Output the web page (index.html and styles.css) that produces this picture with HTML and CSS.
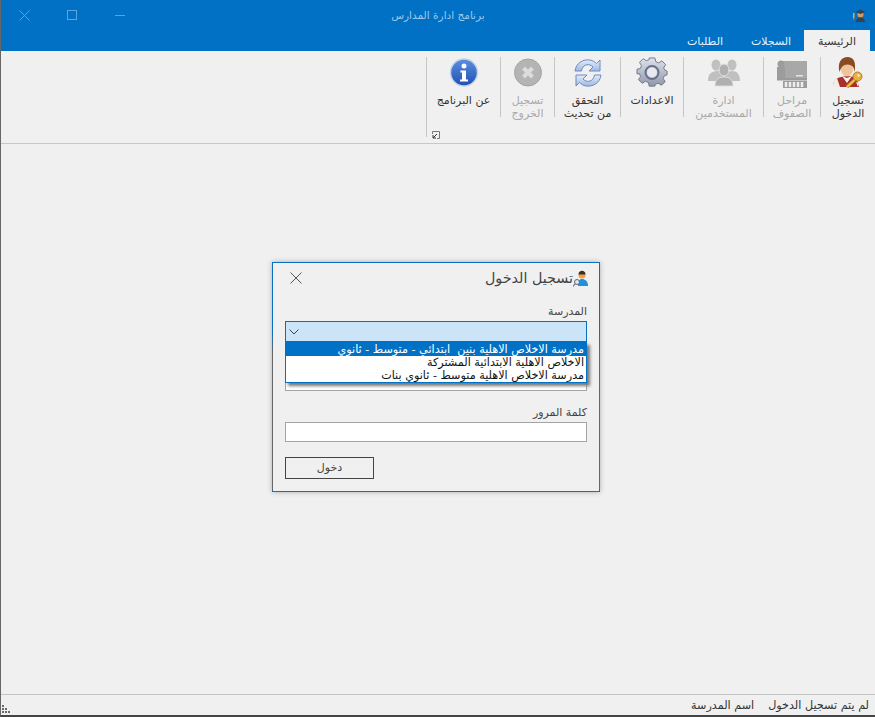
FILE: index.html
```html
<!DOCTYPE html>
<html lang="ar">
<head>
	<meta charset="utf-8"/>
	<title>برنامج ادارة المدارس</title>
	<link rel="stylesheet" href="styles.css">
</head>
<body>
	<div class="app">
		<header class="titlebar">
			<div class="win-buttons">
				<svg width="11" height="11" viewBox="0 0 11 11"><path d="M0.500 0.500l10 10M10.500 0.500l-10 10" stroke="#5ba5de" fill="none"/></svg>
				<svg width="11" height="11" viewBox="0 0 11 11"><rect x="0.500" y="0.500" width="9" height="9" fill="none" stroke="#5ba5de"/></svg>
				<svg class="win-min" width="11" height="2" viewBox="0 0 11 2"><rect width="10" height="1" fill="#5ba5de"/></svg>
			</div>
			<div class="app-title">برنامج ادارة المدارس</div>
			<div class="app-icon-box">
				<svg width="13" height="13" viewBox="0 0 13 13">
					<rect x="0" y="4" width="1.500" height="5" fill="#e8b020"/>
					<path d="M0 9l.8 3 .7-3z" fill="#e07020"/>
					<circle cx="7.500" cy="5.500" r="3" fill="#d09a68"/>
					<path d="M2.500 3L7.500 .5 12.500 3 7.500 5z" fill="#39424c"/>
					<path d="M3 13c0-3 2-4.500 4.500-4.500S12 10 12 13z" fill="#39424c"/>
				</svg>
			</div>
		</header>

		<nav class="tabs">
			<div class="tab active">الرئيسية</div>
			<div class="tab">السجلات</div>
			<div class="tab">الطلبات</div>
		</nav>

		<section class="ribbon">
			<div class="rib-item">
				<svg class="rib-icon" viewBox="0 0 32 32">
					<path d="M1 30c0-7 3-10 14-11 8 0 11 3 12 11z" fill="#a8302a"/>
					<path d="M1 30c0-5 1-7 4-9l3 9zM26 30l-2-5 3 1z" fill="#f2ece4"/>
					<path d="M10 19l5 7 5-7-5 2z" fill="#f6f2ea"/>
					<ellipse cx="15" cy="12" rx="6" ry="7.500" fill="#f0c49a"/>
					<path d="M7.500 15C5 5 10 0 15.500 0c6 0 9 5 7 15-.5-5-2-7-7-7.500-4.500 0-6.500 3-8 7.500z" fill="#8a4a22"/>
					<circle cx="25.500" cy="19.500" r="4.500" fill="#e9b040" stroke="#b97c20"/>
					<circle cx="26.500" cy="18.500" r="1.200" fill="#fff2c8"/>
					<path d="M22.500 23L15 30" stroke="#b97c20" stroke-width="3.500" fill="none"/>
					<path d="M22.500 23L15 30" stroke="#efc050" stroke-width="2" fill="none"/>
				</svg>
				<span>تسجيل<br>الدخول</span>
			</div>
			<div class="rib-item off">
				<svg class="rib-icon" viewBox="0 0 32 32">
					<rect x="6" y="4" width="25" height="17" fill="#a8a8a8"/>
					<circle cx="5" cy="7" r="3.500" fill="#9c9c9c"/>
					<rect x="1" y="10" width="8" height="12" fill="#9c9c9c"/>
					<rect x="20" y="18" width="7" height="1.500" fill="#e4e4e4"/>
					<rect x="1" y="21" width="30" height="2.500" fill="#9a9a9a"/>
					<rect x="7" y="24" width="24" height="7" fill="#9c9c9c"/>
					<path d="M10 25v5M14 25v5M18 25v5M22 25v5M26 25v5" stroke="#eeeeee" stroke-width="2.500"/>
				</svg>
				<span>مراحل<br>الصفوف</span>
			</div>
			<div class="rib-item off">
				<svg class="rib-icon" viewBox="0 0 32 32">
					<ellipse cx="8" cy="8" rx="4.500" ry="5.500" fill="#c0c0c0"/>
					<ellipse cx="24" cy="8" rx="4.500" ry="5.500" fill="#c0c0c0"/>
					<path d="M0 24c0-7 3-9 8-10s8 3 8 10zM16 24c0-7 3-10 8-10s8 3 8 10z" fill="#c0c0c0"/>
					<ellipse cx="16" cy="13" rx="5" ry="6" fill="#b0b0b0" stroke="#dedede"/>
					<path d="M7 29c0-6 3-9 9-9s9 3 9 9z" fill="#b0b0b0" stroke="#dedede"/>
				</svg>
				<span>ادارة<br>المستخدمين</span>
			</div>
			<div class="rib-item">
				<svg class="rib-icon" viewBox="0 0 32 32">
					<defs>
						<linearGradient id="gearFill" x1="0" y1="0" x2="0" y2="1">
							<stop offset="0" stop-color="#dfe3ec"/>
							<stop offset="1" stop-color="#8f97ab"/>
						</linearGradient>
					</defs>
					<path d="M13 1h6l1 4 3 1.300 3.500-2.200 4 4-2.200 3.500L29.600 14l2.400 1v4l-2.900.9-1.300 3 2.200 3.400-4 3.700-3.500-2.100-3 1.200L19 31h-6l-.9-3.900-3-1.200-3.600 2.100-3.900-3.900 2.200-3.400-1.300-3L0 18v-5l3.500-.7 1.300-3L2.700 5.700l3.800-3.900L10 4l3-1.300z" transform="translate(1 0) scale(.94)" fill="url(#gearFill)" stroke="#6d7487"/>
					<circle cx="16" cy="15.500" r="6.500" fill="none" stroke="#69708a" stroke-width="2"/>
					<circle cx="16" cy="15.500" r="5" fill="#e8eaee"/>
				</svg>
				<span>الاعدادات</span>
			</div>
			<div class="rib-item">
				<svg class="rib-icon" viewBox="0 0 32 32">
					<defs>
						<linearGradient id="syncFill" x1="0" y1="0" x2="0" y2="1">
							<stop offset="0" stop-color="#e4ebf8"/>
							<stop offset="1" stop-color="#a0b8e0"/>
						</linearGradient>
					</defs>
					<path d="M3 14C4 6 11 2 18 3c3 .5 5 2 6.500 3.500L28 3v11H17l4-4c-2-2-4-2.500-6-2.300-3 .3-5 3-5.500 6.300z" fill="url(#syncFill)" stroke="#6b8cc4"/>
					<path d="M29 18c-1 8-8 12-15 11-3-.5-5-2-6.500-3.500L4 29V18h11l-4 4c2 2 4 2.500 6 2.300 3-.3 5-3 5.500-6.300z" fill="url(#syncFill)" stroke="#6b8cc4"/>
				</svg>
				<span>التحقق<br>من تحديث</span>
			</div>
			<div class="rib-item off">
				<svg class="rib-icon" viewBox="0 0 32 32">
					<circle cx="16" cy="15.500" r="13.500" fill="#b4b4b4" stroke="#a4a4a4"/>
					<path d="M11.500 11l9 9M20.500 11l-9 9" stroke="#dcdcdc" stroke-width="4" fill="none"/>
				</svg>
				<span>تسجيل<br>الخروج</span>
			</div>
			<div class="rib-item last">
				<svg class="rib-icon" viewBox="0 0 32 32">
					<defs>
						<linearGradient id="infoFill" x1="0" y1="0" x2="0" y2="1">
							<stop offset="0" stop-color="#5d8fe0"/>
							<stop offset="1" stop-color="#1f4fb0"/>
						</linearGradient>
					</defs>
					<circle cx="16" cy="15.500" r="13.500" fill="url(#infoFill)" stroke="#c4d2ea" stroke-width="1.500"/>
					<circle cx="16" cy="9" r="2.500" fill="#fff"/>
					<path d="M12.500 13.500H18v9h2v2h-8v-2h2v-7h-1.500z" fill="#fff"/>
				</svg>
				<span>عن البرنامج</span>
			</div>
			<svg class="launcher" width="8" height="8" viewBox="0 0 8 8">
				<path d="M0.500 3V0.500H7.500V7.500H5" fill="none" stroke="#777"/>
				<path d="M5 3L1 7M1 4v3h3" fill="none" stroke="#333"/>
			</svg>
		</section>

		<main class="workspace">
			<div class="dialog">
				<div class="dialog-head">
					<div class="dialog-title">
						<svg width="16" height="17" viewBox="0 0 16 17">
							<circle cx="9" cy="5" r="3.500" fill="#f0a040"/>
							<path d="M5.500 4.500c0-5 7-5 7 0z" fill="#3a3028"/>
							<path d="M5 16c0-5 1-7 4-7s6 2 6 7z" fill="#1e90e0"/>
							<circle cx="4" cy="12" r="2.500" fill="#dce8f0" stroke="#667"/>
							<path d="M2 14l-2 2.500" stroke="#667" stroke-width="1.200"/>
						</svg>
						<span>تسجيل الدخول</span>
					</div>
					<svg class="dialog-close" width="12" height="12" viewBox="0 0 12 12">
						<path d="M0.500 0.500l11 11M11.500 0.500l-11 11" stroke="#555" fill="none"/>
					</svg>
				</div>
				<label class="field-label first">المدرسة</label>
				<div class="combo">
					<svg width="10" height="6" viewBox="0 0 10 6"><path d="M0.500 0.500L5 5l4.500-4.500" fill="none" stroke="#444"/></svg>
				</div>
				<div class="field-box hidden-field"></div>
				<label class="field-label">كلمة المرور</label>
				<div class="field-box"></div>
				<div class="btn">دخول</div>

				<ul class="drop-list">
					<li class="selected">مدرسة الاخلاص الاهلية بنين&nbsp; ابتدائي - متوسط - ثانوي</li>
					<li>الاخلاص الاهلية الابتدائية المشتركة</li>
					<li>مدرسة الاخلاص الاهلية متوسط - ثانوي بنات</li>
				</ul>
			</div>
		</main>

		<footer class="statusbar">
			<span>لم يتم تسجيل الدخول</span>
			<span>اسم المدرسة</span>
			<svg class="grip" width="9" height="9" viewBox="0 0 9 9">
				<path d="M0 0h2v2H0zM0 3h2v2H0zM3 3h2v2H3zM0 6h2v2H0zM3 6h2v2H3zM6 6h2v2H6z" fill="#6a6a6a"/>
			</svg>
		</footer>
	</div>
</body>
</html>
```

FILE: styles.css
```css
* {
	box-sizing: border-box;
}
body {
	margin: 0;
	background-color: #f0f0f0;
	font-family: "DejaVu Sans", sans-serif;
	font-size: 11px;
	color: #333;
	overflow: hidden;
}
.app {
	width: 875px;
	height: 717px;
	display: flex;
	flex-direction: column;
	border-left: 1px solid #666;
	border-bottom: 2px solid #444;
}

/* title bar */
.titlebar {
	height: 30px;
	flex: none;
	background-color: #0071c5;
	display: grid;
	grid-template-columns: 1fr auto 1fr;
	align-items: center;
}
.app-icon-box {
	display: flex;
	justify-content: flex-end;
	padding-right: 9px;
}
.app-title {
	color: #9cc8ea;
	font-size: 10.500px;
	direction: rtl;
}
.win-buttons {
	display: flex;
	gap: 37px;
	align-items: center;
	padding-left: 18px;
}
.win-min {
	margin-top: 2px;
}

/* tabs */
.tabs {
	height: 21px;
	flex: none;
	background-color: #0071c5;
	display: flex;
	direction: rtl;
	padding-right: 5px;
}
.tab {
	width: 66px;
	color: #e6f1fa;
	text-align: center;
	line-height: 24px;
}
.tab.active {
	background-color: #f0f0f0;
	color: #333;
}

/* ribbon */
.ribbon {
	height: 93px;
	flex: none;
	display: grid;
	direction: rtl;
	justify-content: start;
	grid-template-columns: 55px 57px 80px 63px 66px 54px 74px;
	border-bottom: 1px solid #c8c8c8;
	padding-top: 6px;
	position: relative;
}
.rib-item {
	height: 60px;
	border-left: 1px solid #c6c6c6;
	text-align: center;
	color: #333;
	line-height: 13px;
	display: flex;
	flex-direction: column;
	align-items: center;
}
.rib-item.off {
	color: #a8a8a8;
}
.rib-item.last {
	height: 80px;
}
.rib-icon {
	width: 32px;
	height: 32px;
	flex: none;
	margin-bottom: 5px;
}
.launcher {
	position: absolute;
	left: 431px;
	top: 80px;
}

/* work area */
.workspace {
	flex: 1;
	display: flex;
	padding: 118px 0 0 271px;
}
.dialog {
	width: 328px;
	height: 230px;
	background-color: #f0f0f0;
	border: 1px solid;
	border-image: linear-gradient(#0a6fc0 0, #0a6fc0 70px, #666 90px, #666 227px, #1a6fb5 227px) 1;
	box-shadow: 0 0 5px #aaa;
	padding: 0 12px;
	direction: rtl;
	position: relative;
}
.dialog-head {
	height: 30px;
	display: flex;
	justify-content: space-between;
	align-items: center;
	padding-left: 5px;
}
.dialog-title {
	display: flex;
	align-items: center;
	font-size: 14.300px;
	color: #444;
}
.dialog-title svg {
	margin-right: -2px;
}
.dialog-close {
	flex: none;
}
.field-label {
	display: block;
	color: #444;
	line-height: 14px;
	margin-top: 15px;
	margin-bottom: 2px;
}
.field-label.first {
	margin-top: 12px;
}
.combo {
	height: 21px;
	background-color: #cce4f7;
	border: 1px solid #0071c5;
	display: flex;
	align-items: center;
	padding-left: 3px;
	justify-content: flex-end;
}
.field-box {
	height: 20px;
	background-color: #fff;
	border: 1px solid #a4a4a4;
}
.hidden-field {
	margin-top: 30px;
	height: 19px;
}
.btn {
	width: 89px;
	height: 22px;
	border: 1px solid #444;
	margin-top: 15px;
	text-align: center;
	line-height: 20px;
	color: #444;
	margin-right: 213px;
}
.drop-list {
	position: absolute;
	top: 79px;
	left: 12px;
	width: 302px;
	margin: 0;
	padding: 0;
	list-style: none;
	background-color: #fff;
	border: 1px solid #0071c5;
	box-shadow: 3px 3px 3px #777;
	color: #111;
	font-size: 11.200px;
	line-height: 13px;
}
.drop-list li {
	height: 13px;
	padding-right: 2px;
	white-space: nowrap;
}
.drop-list li.selected {
	background-color: #0071c5;
	color: #fff;
}

/* status */
.statusbar {
	height: 21px;
	flex: none;
	border-top: 1px solid #c4c4c4;
	display: flex;
	direction: rtl;
	align-items: center;
	gap: 14px;
	padding-right: 6px;
	color: #333;
	font-size: 11.200px;
	position: relative;
}
.grip {
	position: absolute;
	left: 1px;
	bottom: 1px;
}
```
